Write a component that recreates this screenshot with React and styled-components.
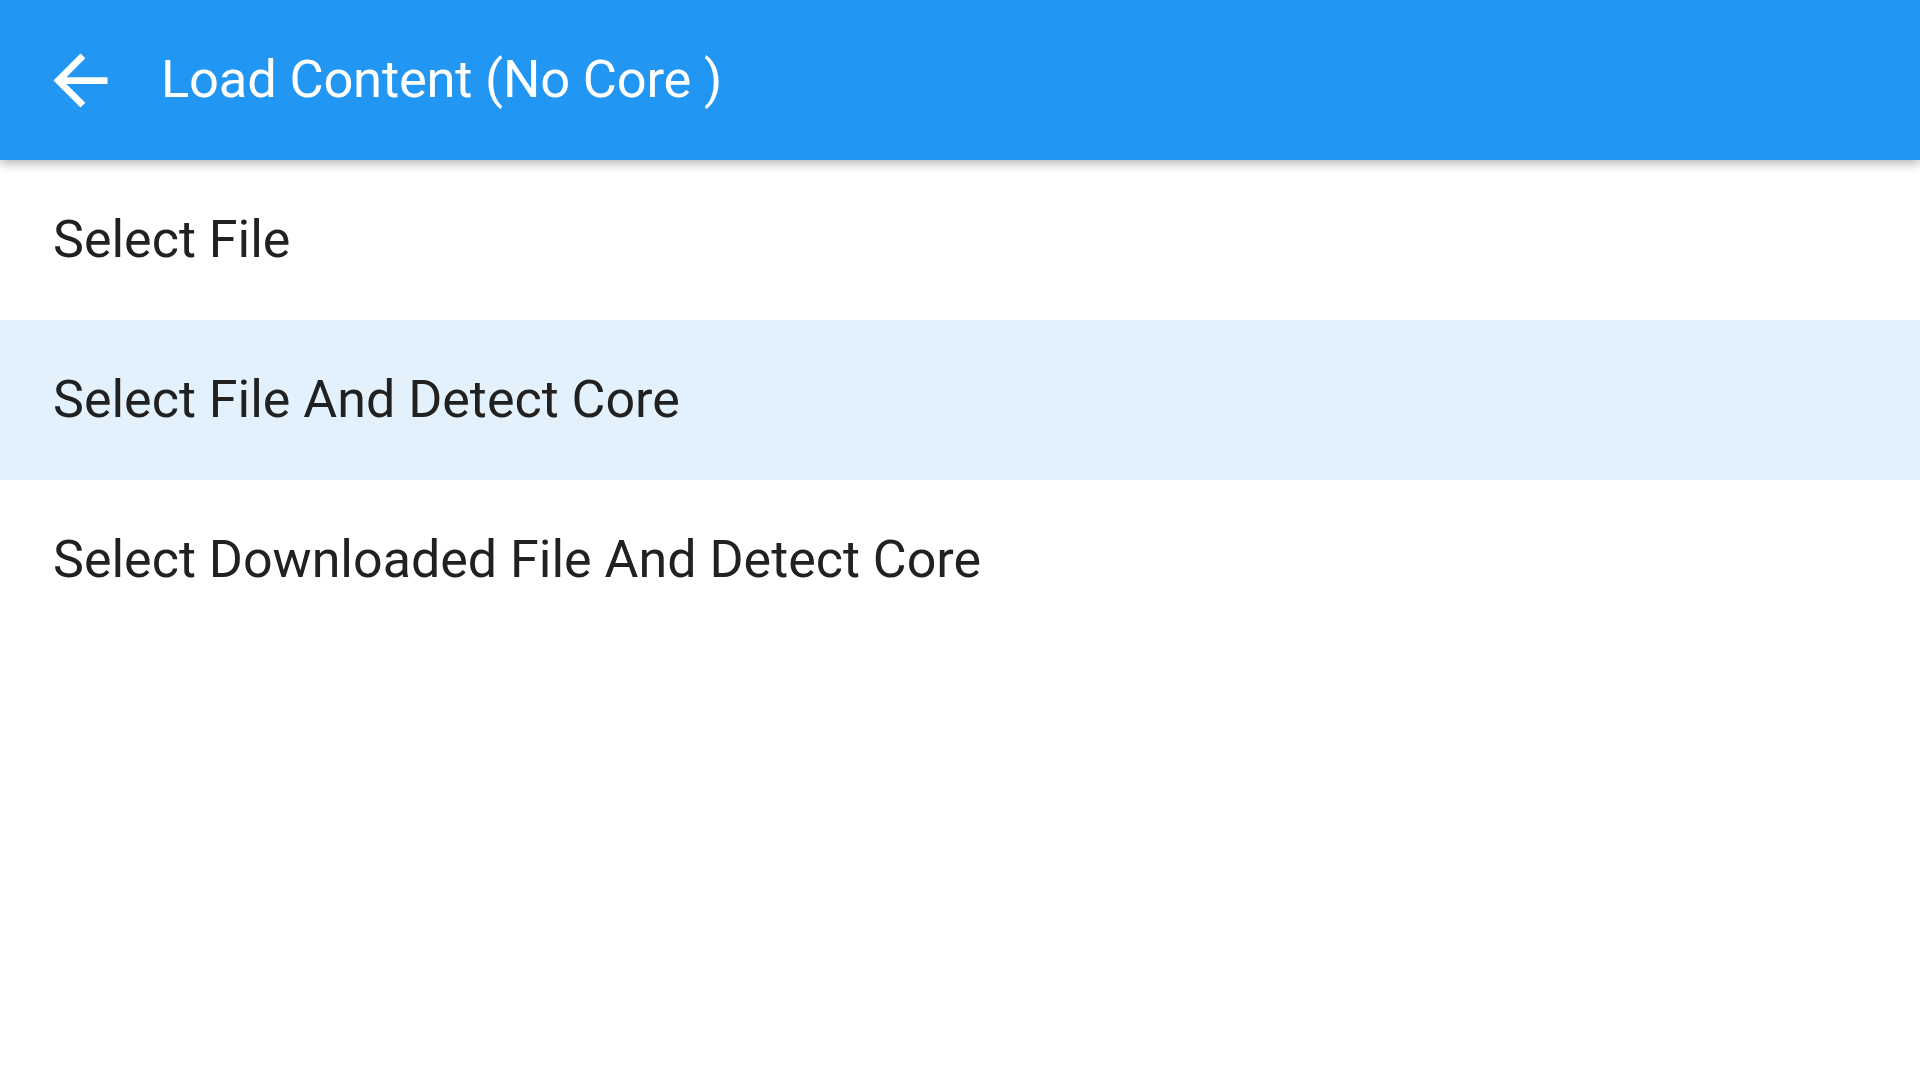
import React from "react";
import styled, { createGlobalStyle } from "styled-components";

const items = [
  { id: 1, label: "Select File" },
  { id: 2, label: "Select File And Detect Core", active: true },
  { id: 3, label: "Select Downloaded File And Detect Core" },
];

const App = () => {
  return (
    <Page>
      <GlobalStyle />
      <Toolbar>
        <BackButton aria-label="back">
          <svg width="81" height="81" viewBox="0 0 24 24">
            <path
              fill="#fff"
              d="M20 11H7.83l5.59-5.59L12 4l-8 8 8 8 1.41-1.41L7.83 13H20v-2z"
            />
          </svg>
        </BackButton>
        <Title>Load Content (No Core )</Title>
      </Toolbar>
      <List>
        {items.map((item) => (
          <Row key={item.id} $active={item.active}>
            {item.label}
          </Row>
        ))}
      </List>
    </Page>
  );
};

const GlobalStyle = createGlobalStyle`
  html, body {
    margin: 0;
    padding: 0;
    background: #fff;
  }
  body {
    font-family: Roboto, "Liberation Sans", sans-serif;
  }
`;

const Page = styled.div`
  width: 1920px;
  height: 1080px;
  background: #fff;
  overflow: hidden;
  display: flex;
  flex-direction: column;
`;

const Toolbar = styled.header`
  height: 160px;
  background: #2196f3;
  display: flex;
  align-items: center;
  box-shadow: 0 4px 10px rgba(0, 0, 0, 0.28);
  position: relative;
  z-index: 1;
  flex-shrink: 0;
`;

const BackButton = styled.div`
  width: 81px;
  height: 81px;
  margin-left: 40px;
  display: flex;
  svg {
    display: block;
  }
`;

const Title = styled.h1`
  margin: 0 0 0 40px;
  padding-bottom: 2px;
  color: #fff;
  font-size: 52.5px;
  font-weight: 400;
  letter-spacing: -0.2px;
`;

const List = styled.div`
  display: flex;
  flex-direction: column;
`;

const Row = styled.div`
  height: 160px;
  display: flex;
  align-items: center;
  padding-left: 53px;
  padding-bottom: 2px;
  box-sizing: border-box;
  font-size: 52px;
  color: #212121;
  background: ${(p) => (p.$active ? "#e3f1fc" : "#fff")};
`;

export default App;
